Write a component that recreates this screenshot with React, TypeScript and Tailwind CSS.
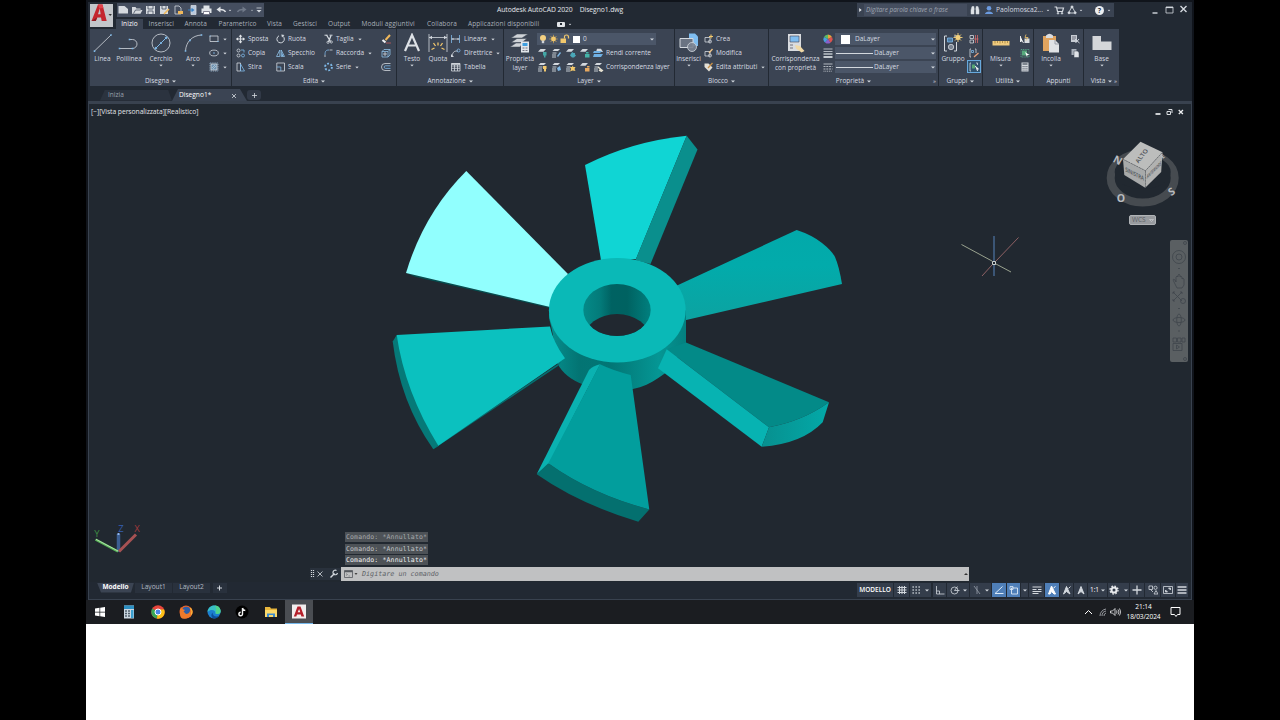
import React from 'react';

type Kids = { children?: React.ReactNode; className?: string };

const Ic: React.FC<Kids & { w?: number; h?: number }> = ({ w = 10, h = 10, className = '', children }) => (
  <svg
    width={w}
    height={h}
    viewBox={`0 0 ${w} ${h}`}
    fill="none"
    stroke="#d3d8de"
    strokeWidth="0.8"
    className={`shrink-0 ${className}`}
  >
    {children}
  </svg>
);

const Caret: React.FC<Kids> = ({ className = '' }) => (
  <svg width="4" height="3" viewBox="0 0 4 3" className={`shrink-0 ${className}`}>
    <path d="M0 .4h4L2 2.6z" fill="#d3d8de" />
  </svg>
);

const Stack = () => (
  <>
    <path d="M3.5 1h5.5l-2 2h-5.5z" fill="#d3d8de" stroke="none" />
    <path d="M1.500 5h4M1 7h4M1 9h4" stroke="#c3c9d0" strokeWidth="1" />
  </>
);

/* ---------- ribbon building blocks ---------- */

const Panel: React.FC<Kids & { title: string; caret?: boolean; launcher?: boolean }> = ({
  title,
  caret = true,
  launcher,
  className = '',
  children,
}) => (
  <section className={`mr-px flex h-[57px] shrink-0 flex-col bg-[#3b4453] ${className}`}>
    <div className="flex h-[45px] pt-[3px]">{children}</div>
    <div className="relative flex h-3 items-center justify-center gap-[3px] pt-[2px]">
      <span>{title}</span>
      {caret && <Caret />}
      {launcher && <span className="absolute right-[2px] text-[6px]">»</span>}
    </div>
  </section>
);

const Col: React.FC<Kids> = ({ className = '', children }) => (
  <div className={`flex shrink-0 flex-col ${className}`}>{children}</div>
);

const Row: React.FC<Kids & { icon: React.ReactNode; caret?: boolean }> = ({ icon, caret, className = '', children }) => (
  <div className={`flex h-[14px] items-center gap-[3px] ${className}`}>
    {icon}
    {children && <span>{children}</span>}
    {caret && <Caret className="ml-[1px] scale-90" />}
  </div>
);

const Big: React.FC<Kids & { label: string; sub?: string; caret?: boolean }> = ({ label, sub, caret, className = '', children }) => (
  <div className={`flex shrink-0 flex-col items-center ${className}`}>
    <div className="flex h-[22px] items-center justify-center">{children}</div>
    <span className="h-[9px] leading-[9px]">{label}</span>
    {sub && <span className="h-[9px] leading-[9px]">{sub}</span>}
    {caret && <Caret className="mt-px scale-90" />}
  </div>
);

/* ---------- top bars ---------- */

const AppButton = () => (
  <div className="relative z-10 -mb-1 flex h-[23px] w-[23px] shrink-0 items-center bg-[#c3c6ca]">
    <svg width="23" height="23" viewBox="0 0 23 23">
      <path d="M1.500 17 8 .5h4.500l4.200 16.500h-5l-.7-3.600H7.400L5.800 17z" fill="#c4262e" />
      <path d="M8 10.200 9.800 4.600l.8 5.600z" fill="#c3c6ca" />
      <path d="M8 .5h4.500l.8 3.500-4 .5z" fill="#e2434b" />
      <path d="M1.500 17 7 13.500 5.800 17z" fill="#8e1a20" />
      <path d="M18.500 10h3.400l-1.700 2z" fill="#333" />
    </svg>
  </div>
);

const QuickAccess = () => (
  <div className="ml-1 flex h-[14px] w-[147px] items-center bg-[#454e5f]">
    <Ic w={14} h={12}><path d="M1.500 2h6l3.500 3v4.500h-9.500z" fill="#d5d9de" stroke="none" /></Ic>
    <Ic w={14} h={12}><path d="M1 3h3.500l1 1.500h4V6h2L9.500 9.700H1z" fill="#d5d9de" stroke="none" /><path d="M2.500 9.500 4.500 6h5" stroke="#454e5f" /></Ic>
    <Ic w={14} h={12}><path d="M1 2h9v8H1z" fill="#d5d9de" stroke="none" /><path d="M3 2v3h5V2M3 10V7h5v3" stroke="#454e5f" /></Ic>
    <Ic w={14} h={12}><path d="M1 2h8v8H1z" fill="#d5d9de" stroke="none" /><path d="M3 2v3h4V2" stroke="#454e5f" /><path d="m5 10 5-5" stroke="#efb85b" strokeWidth="1.600" /></Ic>
    <Ic w={14} h={12}><path d="M2 2h4l2 2v6H2z" /><path d="M5 7h5v3H5z" fill="#efb85b" stroke="none" /></Ic>
    <Ic w={14} h={12}><path d="M4 1.500h5v9H4z" fill="#b9c9dd" /><path d="M1 6h5M4.500 4.500 6.500 6 4.500 7.500" stroke="#3b82c4" strokeWidth="1.200" /></Ic>
    <Ic w={14} h={12}><path d="M2.500 1.500h6v3h2v4.500h-10V4.500h2z" fill="#dfe3e7" stroke="none" /><path d="M2.500 7.500h6v3h-6z" fill="#fff" stroke="#667" /></Ic>
    <Ic w={12} h={12}><path d="M10.500 8C9.500 5.800 8 5.500 5 5.500" stroke="#e1e4e8" strokeWidth="1.500" /><path d="M5.500 2.500 1.500 5.500l4 3z" fill="#e1e4e8" stroke="none" /></Ic>
    <Caret className="ml-[1px] scale-75" />
    <Ic w={14} h={12} className="ml-1"><path d="M1.500 8C2.500 5.800 4 5.500 7 5.500" stroke="#717a89" strokeWidth="1.500" /><path d="m6.500 2.500 4 3-4 3z" fill="#717a89" stroke="none" /></Ic>
    <Caret className="scale-75 opacity-60" />
    <Ic w={6} h={8} className="ml-[2px]"><path d="M.5 2h5" /><path d="M.5 4h5L3 6.500z" fill="#d3d8de" stroke="none" /></Ic>
  </div>
);

const TitleBar = () => (
  <div className="flex h-4 items-start">
    <QuickAccess />
    <div className="ml-[233px] flex h-[14px] w-[360px] items-center gap-[7px] text-[6.800px] tracking-[-0.080px] text-[#e3e6ea]">
      <span>Autodesk AutoCAD 2020</span>
      <span>Disegno1.dwg</span>
    </div>
    <div className="flex h-[14px] w-[257px] items-center bg-[#3a4352]">
      <svg width="7" height="8" viewBox="0 0 7 8"><path d="M2.200 2v4l2.500-2z" fill="#e1e4e8" /></svg>
      <div className="flex h-3 w-[103px] items-center bg-[#454e5f] pl-[2px] text-[6.300px] italic text-[#a0a7b2]">Digitare parola chiave o frase</div>
      <Ic w={11} h={10} className="ml-[3px]"><path d="M1 9V5l1-3.500h2V9zM9 9V5L8 1.500H6V9zM4 4h2" fill="#dfe3e7" strokeWidth=".5" /></Ic>
      <Ic w={10} h={10} className="ml-1"><circle cx="4" cy="3.300" r="2.300" fill="#6b9be0" stroke="none" /><path d="M0 9c0-3.500 8-3.500 8 0z" fill="#6b9be0" stroke="none" /></Ic>
      <span className="ml-px w-[50px] text-[6.700px]">Paolomosca2...</span>
      <Caret className="scale-75" />
      <Ic w={11} h={10} className="ml-[4px]"><path d="M.5 2h2l1 4.500h5l1-3.500H3" strokeWidth="1.200" /><circle cx="4" cy="8.300" r=".8" fill="#d3d8de" /><circle cx="8" cy="8.300" r=".8" fill="#d3d8de" /></Ic>
      <Ic w={11} h={10} className="ml-[2px]"><path d="M5 1.500 1.500 8h7z" strokeWidth=".9" /><circle cx="5" cy="2" r="1.100" fill="#dfe3e7" /><circle cx="2" cy="7.800" r="1" fill="#dfe3e7" /><circle cx="8.200" cy="7.800" r="1" fill="#dfe3e7" /></Ic>
      <Caret className="ml-px scale-75" />
      <div className="ml-[12px] flex h-[9px] w-[9px] items-center justify-center rounded-full bg-[#eceef1] text-[7px] font-bold leading-none text-[#2d3646]">?</div>
      <Caret className="ml-[3px] scale-75" />
    </div>
    <Ic w={40} h={12} className="ml-[37px]"><path d="M1.500 10h5" strokeWidth="1.400" /><path d="M15 4h7v6h-7z" /><path d="M15 4.500h7" strokeWidth="1.200" /><path d="m29.500 3 6 6m0-6-6 6" strokeWidth="1.400" /></Ic>
  </div>
);

const MenuTabs = () => (
  <nav className="flex h-[10px] items-center tracking-[0.090px] text-[#a9b0ba]">
    <span className="ml-[3px] flex h-[10px] w-[27px] items-center justify-center bg-[#3b4453] text-white">Inizio</span>
    <span className="ml-[5.500px] w-[36px]">Inserisci</span>
    <span className="w-[34px]">Annota</span>
    <span className="w-[48.500px]">Parametrico</span>
    <span className="w-[26px]">Vista</span>
    <span className="w-[35px]">Gestisci</span>
    <span className="w-[33.500px]">Output</span>
    <span className="w-[65.500px]">Moduli aggiuntivi</span>
    <span className="w-[41px]">Collabora</span>
    <span className="w-[88.500px]">Applicazioni disponibili</span>
    <span className="flex h-[5px] w-2 items-center justify-center rounded-[1px] bg-[#e1e4e8]"><i className="h-[2px] w-[2px] bg-[#222933]" /></span>
    <Caret className="ml-[3px] scale-75" />
  </nav>
);

/* ---------- ribbon ---------- */

const Draw = () => (
  <Panel title="Disegna" className="w-[141px]">
    <Big label="Linea" className="w-[25px]">
      <Ic w={20} h={20}><path d="M1.500 18 18 2" /><path d="M.7 17.300h1.600v1.600H.7zM17.200 1.200h1.600v1.600h-1.600z" fill="#7fb9e8" stroke="none" /></Ic>
    </Big>
    <Big label="Polilinea" className="w-[28px]">
      <Ic w={22} h={20}><path d="M1.500 15.500h13a4.500 4.500 0 0 0 0-9h-3" /><path d="M.7 14.700h1.600v1.600H.7zM10.700 5.700h1.600v1.600h-1.600zM13.700 14.700h1.600v1.600h-1.600z" fill="#7fb9e8" stroke="none" /></Ic>
    </Big>
    <Big label="Cerchio" caret className="ml-[3px] w-[30px]">
      <Ic w={20} h={20}><circle cx="10" cy="10" r="9" /><path d="m5 15 10-10" stroke="#7fb9e8" strokeWidth="1" /><circle cx="10" cy="10" r="1.100" fill="#7fb9e8" stroke="none" /><path d="m13.500 4 3-.5-.5 3zM6.500 16l-3 .5.5-3z" fill="#7fb9e8" stroke="none" /></Ic>
    </Big>
    <Big label="Arco" caret className="ml-[1px] w-[32px]">
      <Ic w={19} h={20}><path d="M1.500 18C2 9 8 2.500 17.500 2" /><path d="M.7 17.200h1.600v1.600H.7zM16.700 1.200h1.600v1.600h-1.600zM5 6.500h1.800v1.800H5z" fill="#7fb9e8" stroke="none" /></Ic>
    </Big>
    <Col className="w-[22px]">
      <Row caret icon={<Ic><path d="M1 2h8v5.500H1z" /><path d="M.4 1.400h1.200v1.200H.4zM8.400 6.900h1.200v1.200H8.400z" fill="#7fb9e8" stroke="none" /></Ic>} />
      <Row caret icon={<Ic><ellipse cx="5" cy="5" rx="4.300" ry="2.900" /><circle cx="5" cy="5" r=".8" fill="#7fb9e8" stroke="none" /></Ic>} />
      <Row caret icon={<Ic><path d="M1 1h8v8H1z" stroke="#9bb9d2" strokeDasharray="1.400 .8" /><path d="M2 2h6v6H2z" fill="#6f93b1" /><path d="m3 6 3-3M4 7l3-3" stroke="#dce6ee" strokeWidth=".5" /></Ic>} />
    </Col>
  </Panel>
);

const Edit = () => (
  <Panel title="Edita" className="w-[164px]">
    <Col className="w-[40px] pl-[4px]">
      <Row icon={<Ic w={9}><path d="M4.500 1v8M.5 5h8" strokeWidth="1.200" /><path d="m2.700 2.700 1.800-2.200 1.800 2.200zM2.700 7.300l1.800 2.200 1.800-2.200zM2.200 3.200 0 5l2.200 1.800zM6.800 3.200 9 5 6.800 6.800z" fill="#e3e6ea" stroke="none" /></Ic>}>Sposta</Row>
      <Row icon={<Ic w={9}><circle cx="2.500" cy="2.500" r="1.500" /><circle cx="2.500" cy="7.500" r="1.500" /><circle cx="7" cy="7.500" r="1.500" stroke="#7fb9e8" /><path d="M5 2h3v2.500" stroke="#7fb9e8" /></Ic>}>Copia</Row>
      <Row icon={<Ic w={9}><path d="M1 1h3.500v8H1z" /><path d="M4.500 2 8.500 9h-4z" stroke="#7fb9e8" /></Ic>}>Stira</Row>
    </Col>
    <Col className="w-[48px] pl-[4px]">
      <Row icon={<Ic w={9}><path d="M7 2.300A3.700 3.700 0 1 1 3 1.800" strokeWidth="1" /><path d="M5.300.5 8.500 1 6 3.600z" fill="#d3d8de" stroke="none" /></Ic>}>Ruota</Row>
      <Row icon={<Ic w={9}><path d="M3.800 2v6.500H.5zM5.200 2v6.500h3.300z" stroke="#8fc0e6" /><path d="M5.500 4v4h2z" fill="#7fb9e8" stroke="none" /></Ic>}>Specchio</Row>
      <Row icon={<Ic w={9}><path d="M.8 1h7.700v8H.8z" /><path d="M.8 5h4v4" stroke="#7fb9e8" /></Ic>}>Scala</Row>
    </Col>
    <Col className="w-[60px] pl-[4px]">
      <Row caret icon={<Ic w={9}><path d="M.5 1.200h3M5.500 1.200h3" strokeWidth="1" /><path d="m2.500 1 4 6.500M7 1.500 4.500 8" strokeWidth="1.300" /><circle cx="7.300" cy="8" r="1.100" /><circle cx="4" cy="8.300" r="1.100" /></Ic>}>Taglia</Row>
      <Row caret icon={<Ic w={9}><path d="M1 9V7" /><path d="M1 7c0-4 1-5 4-5" stroke="#7fb9e8" /><path d="M5.500 2h3" /></Ic>}>Raccorda</Row>
      <Row caret icon={<Ic w={9}><circle cx="4.500" cy="5" r="3.400" stroke="#7fb9e8" strokeWidth="1.900" strokeDasharray="1.900 1.660" /></Ic>}>Serie</Row>
    </Col>
    <Col className="w-[12px] pl-[1px]">
      <Row icon={<Ic><path d="m4.500 6 4.500-5" stroke="#efb85b" strokeWidth="2" /><path d="M1.500 6 4.500 8.500" stroke="#f1f2f4" strokeWidth="2.200" /><path d="M5 9h5" stroke="#c35b5b" /></Ic>} />
      <Row icon={<Ic><path d="M1 3.500h6v5.500H1zM3 1.500h6v5.500M1 3.500l2-2M7 3.500l2-2M7 9l2-2" stroke="#8fc0e6" /><path d="M3 5h2v2H3z" /></Ic>} />
      <Row icon={<Ic><path d="M9.500 1.500H4a3.500 3.500 0 0 0 0 7h5.500" /><path d="M9.500 3.800H4.500a1.200 1.200 0 0 0 0 2.600h5" stroke="#7fb9e8" /></Ic>} />
    </Col>
  </Panel>
);

const Annotate = () => (
  <Panel title="Annotazione" className="w-[106px]">
    <Big label="Testo" caret className="w-[30px]">
      <Ic w={18} h={20}><path d="M2 18 9 2l7 16M4.800 12.500h8.400" stroke="#dde1e6" strokeWidth="2.200" /></Ic>
    </Big>
    <Big label="Quota" className="w-[22px]">
      <Ic w={20} h={20}><path d="M1 1v18M19 1v18M1 4.500h18" /><path d="m1 4.500 3-1.700v3.400zM19 4.500l-3-1.700v3.400z" fill="#d3d8de" stroke="none" /><path d="m5.500 10 2 3M10 9.500v3M14.500 10l-2 3M3.500 16.500l3-1.500M16.500 16.500l-3-1.500" stroke="#f2c86c" strokeWidth="1.300" /></Ic>
    </Big>
    <Col className="w-[54px] pl-[1px]">
      <Row caret icon={<Ic w={11}><path d="M1.500 1v8M9.500 1v8" stroke="#7fb9e8" /><path d="M1.500 5h8" /><path d="m1.500 5 2-1v2zM9.500 5l-2-1v2z" fill="#d3d8de" stroke="none" /></Ic>}>Lineare</Row>
      <Row caret icon={<Ic w={11}><path d="M2 8c1-5 3-5 6-5" /><circle cx="8.500" cy="2.500" r="1.500" stroke="#7fb9e8" /><path d="M1 6v3h3z" fill="#d3d8de" stroke="none" /></Ic>}>Direttrice</Row>
      <Row icon={<Ic w={11}><path d="M1.500 1.500h8.500v7.500H1.500zM1.500 6.300h8.500M4.500 3v6M7.500 3v6M1.500 4h8.500" /><path d="M1.500 2h8.500" strokeWidth="1.600" /></Ic>}>Tabella</Row>
    </Col>
  </Panel>
);

const LayerTool: React.FC<{ mark: string; full?: boolean; shape: string }> = ({ mark, full, shape }) => (
  <Ic w={11} className="mr-[3px]">
    {full ? <Stack /> : <path d="M3.500 1h5.500l-2.500 2.800H1z" fill="#d3d8de" stroke="none" />}
    <path d={shape} fill={mark} stroke="none" />
  </Ic>
);

const Layer = () => (
  <Panel title="Layer" className="w-[170px]">
    <Big label="Proprietà" sub="layer" className="w-[32px]">
      <Ic w={22} h={20}>
        <path d="M8 1h11l-6 4H2zM8 5.500h10l-5 4H2zM7 10h7l-3 4H1z" fill="#cfd3d8" stroke="#3b4453" strokeWidth=".5" />
        <path d="M12 8.500h8v11h-8z" fill="#e3e6ea" stroke="none" /><path d="M13.500 10h5v3h-5z" fill="#3f9fe0" stroke="none" /><path d="M13.500 15h2m1 0h2m-5 2.500h2m1 0h2" stroke="#556" />
      </Ic>
    </Big>
    <Col className="w-[137px] pl-[1px]">
      <div className="flex h-[14px] items-center">
        <div className="flex h-[12px] w-[119px] items-center bg-[#4b5668]">
          <Ic w={11}><circle cx="6" cy="4" r="3" fill="#f4d081" stroke="none" /><path d="M4.800 6.500h2.400v2.700H4.800z" fill="#cfd3d8" stroke="none" /></Ic>
          <Ic w={11}><path d="M5.500.8v8.400M1.300 5h8.400M2.500 2l6 6M8.500 2l-6 6" stroke="#d3a752" strokeWidth=".7" /><circle cx="5.500" cy="5" r="2.400" fill="#f2c86c" stroke="none" /></Ic>
          <Ic w={11}><path d="M1.500 4.500h5.500v4.500H1.500z" fill="#f2c86c" stroke="none" /><path d="M5.500 4.500V2.500q0-1.500 2-1.500t2 2v1.500" stroke="#f2c86c" strokeWidth="1.200" /></Ic>
          <i className="ml-[3px] h-[7px] w-[7px] bg-white" />
          <span className="ml-[3px] w-[67px]">0</span>
          <Caret />
        </div>
      </div>
      <div className="flex h-[14px] items-center">
        <LayerTool mark="#43a6a6" shape="M6 4h3.500v3.500H8.500v2h-1.500v-2H6z" />
        <LayerTool full mark="#7fb9e8" shape="m6 8 3-4 1 1-3 4z" />
        <LayerTool mark="#4aa7b8" shape="M7.500 4l1 1h1.500v1.500L11 7.500 9 9.500H7L5 7.500l1-2z" />
        <LayerTool mark="#45b3a8" shape="M6 6h4.500v3.500H6zM7 4h2.500v1.500H7z" />
        <Ic w={11}><path d="M4 .8h4L10 4H3z" fill="#d3d8de" stroke="none" /><path d="M1 3h8L7 5H0zM1 6h9L8 9H0z" fill="#6fb0e4" stroke="none" /></Ic>
        <span className="ml-[2px]">Rendi corrente</span>
      </div>
      <div className="flex h-[14px] items-center">
        <LayerTool full mark="#f2c86c" shape="M6 4h3.500v3H9v2.500H7V7H6z" />
        <LayerTool full mark="#7fb9e8" shape="M6 6l3-2 1 4-3 1z" />
        <LayerTool full mark="#f2c86c" shape="M7.500 3.500l1 1.500h2L9.500 7l1 2-3-.5L5 9.500 6 7 5 5h2z" />
        <LayerTool mark="#e6a860" shape="M6 6h4.500v3.500H6zM8 4h2.500v1.500H8z" />
        <Ic w={11}><Stack /><path d="m5 5 5 4M6 8l3 1.500" stroke="#e7e2d2" strokeWidth="1.600" /></Ic>
        <span className="ml-[2px] tracking-[-0.050px]">Corrispondenza layer</span>
      </div>
    </Col>
  </Panel>
);

const Block = () => (
  <Panel title="Blocco" className="w-[93px]">
    <Big label="Inserisci" caret className="w-[27px]">
      <Ic w={20} h={20}><path d="M10 .5h6l3 3v9.500h-9z" fill="#7fbdf0" stroke="none" /><path d="M1 5.500h13v9H1z" fill="#6a7382" strokeWidth="1" /><circle cx="13" cy="14" r="4.500" fill="#7b8492" fillOpacity=".9" /></Ic>
    </Big>
    <Col className="w-[64px] pl-[2px]">
      <Row icon={<Ic w={9}><path d="M1 3.500h5v4.500H1z" /><circle cx="6" cy="7.500" r="1.500" /><path d="M7 .5v4M5 2.500h4" stroke="#f2c86c" strokeWidth="1.100" /></Ic>}>Crea</Row>
      <Row icon={<Ic w={9}><path d="M1 3.500h5v4.500H1z" /><circle cx="6" cy="7.500" r="1.500" /><path d="m5 5 3.500-4" stroke="#efc58a" strokeWidth="1.400" /></Ic>}>Modifica</Row>
      <Row caret icon={<Ic w={9}><path d="M.5 1.500h4l4 4L5 9.500.5 5z" fill="#e4e0d6" stroke="none" /><path d="m4 6 4.500-5" stroke="#c99047" strokeWidth="1.300" /></Ic>}>Edita attributi</Row>
    </Col>
  </Panel>
);

const Combo: React.FC<Kids> = ({ className = '', children }) => (
  <div className={`ml-[2px] flex h-[12px] w-[101px] items-center bg-[#4b5668] ${className}`}>{children}<Caret className="ml-auto mr-[1px]" /></div>
);

const Properties = () => (
  <Panel title="Proprietà" launcher className="w-[169px]">
    <Big label="Corrispondenza" sub="con proprietà" className="w-[53px]">
      <Ic w={20} h={20}><path d="M2 1h13v17H2z" fill="#d9dce0" stroke="none" /><path d="M4 3h9v6H4z" fill="#7fbdf0" stroke="#445" strokeWidth=".6" /><path d="M4 12h3M4 15h3" stroke="#556" /><path d="m9 12 5 1 4.500 5-3 1.500-5.500-4z" fill="#f0d9a6" stroke="none" /></Ic>
    </Big>
    <Col className="w-[115px] pl-px">
      <div className="flex h-[14px] items-center">
        <Ic w={10}>
          <path d="M5 5V.5A4.500 4.500 0 0 1 9 3z" fill="#e9a33c" stroke="none" /><path d="M5 5 9 3a4.500 4.500 0 0 1-1.500 5.700z" fill="#d9534f" stroke="none" />
          <path d="M5 5l2.500 3.700A4.500 4.500 0 0 1 2 8.400z" fill="#8a5fc8" stroke="none" /><path d="M5 5 2 8.400A4.500 4.500 0 0 1 1 3z" fill="#4b9fe0" stroke="none" /><path d="M5 5 1 3A4.500 4.500 0 0 1 5 .5z" fill="#5dbb63" stroke="none" />
        </Ic>
        <Combo><i className="ml-[6px] mr-[5px] h-[9px] w-[9px] bg-white" />DaLayer</Combo>
      </div>
      <div className="flex h-[14px] items-center">
        <Ic w={10}><path d="M.5 1h9M.5 3.500h9" /><path d="M.5 6h9" strokeWidth="1.300" /><path d="M.5 9h9" strokeWidth="1.800" /></Ic>
        <Combo><i className="ml-px mr-px h-px w-[37px] bg-[#d3d8de]" />DaLayer</Combo>
      </div>
      <div className="flex h-[14px] items-center">
        <Ic w={10}><path d="M.5 2h9" /><path d="M.5 4.500h9M.5 7h9" strokeDasharray="2 .8" /><path d="M.5 9.200h9" strokeDasharray="1 .8" /></Ic>
        <Combo><i className="ml-px mr-px h-px w-[37px] bg-[#d3d8de]" />DaLayer</Combo>
      </div>
    </Col>
  </Panel>
);

const Groups = () => (
  <Panel title="Gruppi" className="w-[43px]">
    <Big label="Gruppo" className="w-[28px]">
      <Ic w={20} h={20}><path d="M4 3H1.500v15H4M11 3h2.500M11 18h2.500V9" strokeWidth="1" /><path d="M4.500 5h5v4h-5z" fill="#4d7ca6" stroke="#7fb9e8" /><circle cx="8" cy="14" r="2.700" fill="#7b8492" /><path d="M15 0v9M10.500 4.500h9M12 1.500l6 6M18 1.500l-6 6" stroke="#f2d07c" strokeWidth=".9" /><circle cx="15" cy="4.500" r="2.500" fill="#f2d07c" stroke="none" /></Ic>
    </Big>
    <Col className="w-[14px] items-center">
      <Row icon={<Ic><path d="M1 1.500h3.500v3H1zM1 6h3.500v3H1z" /><path d="M6.500 1v8M8.500 1v8M5 5h4.500" stroke="#d66a6a" /></Ic>} />
      <Row icon={<Ic><path d="M2 1H1v8h1M6 1h1v4" /><path d="M2.500 2.500h2v2h-2z" stroke="#7fb9e8" /><path d="m5 9 4.500-4" stroke="#e6a07a" strokeWidth="1.300" /></Ic>} />
      <div className="flex h-[13px] w-[14px] items-center justify-center border border-[#67a9dd] bg-[#31536f]">
        <Ic><path d="M2 1H1v8h1M7 1h1.500v2" /><path d="M3 2.500h3v4H3z" fill="#57a773" stroke="none" /><path d="m6 4 3.500 3H8l.5 2" fill="#fff" stroke="#fff" /></Ic>
      </div>
    </Col>
  </Panel>
);

const Utilities = () => (
  <Panel title="Utilità" className="w-[50px]">
    <Big label="Misura" caret className="w-[35px]">
      <Ic w={18} h={20}><path d="M.5 8h17v4.500H.5z" fill="#f0cb7e" stroke="none" /><path d="M3 8v2.500M5.500 8v2M8 8v2.500M10.500 8v2M13 8v2.500M15.500 8v2" stroke="#8a6b2c" strokeWidth=".6" /></Ic>
    </Big>
    <Col className="w-[14px] items-center">
      <Row icon={<Ic><path d="M.5 2v6L2 6.500 3.500 9" fill="#fff" stroke="#fff" /><path d="M4.500 4.500H9.500V9H4.500z" fill="#d9dce0" stroke="none" /><path d="m6 .5-1 3h3l-2 3" stroke="#f2c86c" /></Ic>} />
      <Row icon={<Ic><path d="M1 1.500h8v7.500H1z" stroke="#5aae8d" strokeDasharray="1.200 .6" /><path d="M2 2.500h5v5H2z" fill="#56a87c" stroke="none" /><path d="m5 4 4.500 3H7.500L7 9z" fill="#fff" stroke="none" /></Ic>} />
      <Row icon={<Ic><path d="M1.500.5h7v9h-7z" fill="#d5d9de" stroke="none" /><path d="M2.500 2h5" stroke="#444d5c" strokeWidth="1.200" /><path d="M2.500 4.500h5M2.500 6.300h5M2.500 8.100h5" stroke="#444d5c" strokeDasharray="1.200 .7" /></Ic>} />
    </Col>
  </Panel>
);

const Clipboard = () => (
  <Panel title="Appunti" caret={false} className="w-[49px]">
    <Big label="Incolla" caret className="w-[34px]">
      <Ic w={18} h={20}><path d="M1 3h13v15H1z" fill="#e0a45f" stroke="none" /><path d="M4 2.500Q7.500-1 11 2.500V5H4z" fill="#d9dce0" stroke="none" /><path d="M7 7h6l4 4v8.500H7z" fill="#dfe2e6" stroke="none" /><path d="M13 7v4h4" stroke="#8b93a0" /></Ic>
    </Big>
    <Col className="w-[14px] items-center">
      <Row icon={<Ic><path d="M1 1h6v7H1z" fill="#c6cbd2" stroke="none" /><path d="M2 3h4M2 5h4" stroke="#556" /><path d="m5 5 4.500 4M9 5 5.500 9" strokeWidth="1" /></Ic>} />
      <Row icon={<Ic><path d="M1.500 1h5v6h-5z" fill="#aab1bb" stroke="none" /><path d="M4 3h3.500L9 4.500V9.500H4z" fill="#e1e4e8" stroke="#3b4453" strokeWidth=".5" /></Ic>} />
    </Col>
  </Panel>
);

const View = () => (
  <Panel title="Vista" launcher className="w-[35px]">
    <Big label="Base" caret className="w-[35px]">
      <Ic w={20} h={20}><path d="M.5 3H9v5.500h10.500V17H.5z" fill="#d4d6d9" stroke="none" /></Ic>
    </Big>
  </Panel>
);

const FileTabs = () => (
  <div className="mt-[3px] flex h-[12px] items-center pl-[12px]">
    <div className="flex h-[11px] w-[72px] items-center bg-[#2b333f] pl-[8px] text-[#9aa2ad] [clip-path:polygon(5px_0,68px_0,72px_100%,0_100%)]">Inizia</div>
    <div className="flex h-[12px] w-[75px] items-center rounded-t-[3px] bg-[#3b4453] pl-[7px] pt-px text-white [clip-path:polygon(6px_0,68px_0,75px_100%,0_100%)]">
      <span className="w-[52px] text-[6.600px]">Disegno1*</span>
      <Ic w={6} h={6}><path d="m1 1 4 4M5 1 1 5" /></Ic>
    </div>
    <div className="flex h-[10px] w-[14px] items-center justify-center rounded-[3px] bg-[#313947]">
      <Ic w={7} h={7}><path d="M3.500 1v5M1 3.500h5" /></Ic>
    </div>
  </div>
);

/* ---------- viewport ---------- */

const Model = () => (
  <svg width="1102" height="478" viewBox="89 104 1102 478" className="absolute inset-0">
    <defs>
      <linearGradient id="side" x1="549" x2="686" y1="0" y2="0" gradientUnits="userSpaceOnUse">
        <stop offset="0" stopColor="#068f8e" /><stop offset=".22" stopColor="#037473" /><stop offset=".45" stopColor="#027675" />
        <stop offset=".8" stopColor="#059694" /><stop offset="1" stopColor="#04807f" />
      </linearGradient>
      <linearGradient id="bore" x1="583" x2="651" y1="0" y2="0" gradientUnits="userSpaceOnUse">
        <stop offset="0" stopColor="#048a88" /><stop offset=".25" stopColor="#037b7a" /><stop offset=".42" stopColor="#006262" /><stop offset=".65" stopColor="#006261" /><stop offset="1" stopColor="#01807f" />
      </linearGradient>
      <linearGradient id="right" x1="0" x2="0" y1="230" y2="320" gradientUnits="userSpaceOnUse">
        <stop offset="0" stopColor="#02a9aa" /><stop offset=".4" stopColor="#02abab" /><stop offset="1" stopColor="#0ca3a1" />
      </linearGradient>
      <linearGradient id="tip" x1="765" x2="828" y1="0" y2="0" gradientUnits="userSpaceOnUse">
        <stop offset="0" stopColor="#079190" /><stop offset="1" stopColor="#03a9a8" />
      </linearGradient>
      <clipPath id="hole"><ellipse cx="617" cy="310" rx="33.700" ry="26" /></clipPath>
    </defs>

    <path d="M585 165Q631 141.500 686.700 135.700L636 259 601 260z" fill="#10d5d4" />
    <path d="M686.700 135.700 697.500 149.500 650.500 264 635.500 260z" fill="#0a8f8d" />
    <path d="M406 273 549 306.700 549.500 308 415 276.800z" fill="#034f50" />
    <path d="M466.300 171Q424 213 406 273L550 307 568 274z" fill="#91fffe" />
    <path d="M676 286 796.700 230Q812 235 822 243T835 257Q839 266 842 284L684 320.500z" fill="url(#right)" />

    <path d="M549 314V318Q554 335 556 360C563 380 590 390.500 617 390.500 640 390.500 655 382 670 369L686 344V310z" fill="url(#side)" />
    <path d="M396.700 335 392.700 341.500Q400 402 433.300 449.300L438.500 446z" fill="#067978" />
    <path d="M433.300 449.300 438.300 445 561 362 558 366z" fill="#047071" />
    <path d="M396.700 335 550 326.500Q553 342 565 358.300L438.300 445.700Q405 392 396.700 335z" fill="#0bc1bf" />

    <path d="M536.700 474.300 589 370Q593 366 600 364.300L549 464z" fill="#0ab2b1" />
    <path d="M548.300 463.300Q591 494 649.300 509.500L638.300 521.700Q579 504 536.700 474.300z" fill="#04706f" />
    <path d="M600 364.300Q614 371 630.700 375L649.300 509.500Q591 494 548.300 463.300z" fill="#029e9d" />

    <path d="M666.700 349.300 686 342.500 829 402.300Q803 421 769 427.300z" fill="#038a88" />
    <path d="M666.700 349.300 769 427.300 761.700 446.700 658 368.300z" fill="#07b3b2" />
    <path d="M769 427.300Q803 421 829 402.300L822.700 422.300Q802 444 761.700 446.700z" fill="url(#tip)" />

    <ellipse cx="617.300" cy="310.200" rx="68.400" ry="52.300" fill="#0ab9b7" />
    <ellipse cx="617" cy="310" rx="33.700" ry="26" fill="url(#bore)" />
    <ellipse cx="617" cy="339" rx="33" ry="25" fill="#212830" clipPath="url(#hole)" />

    <g fill="none" strokeWidth=".9">
      <path d="M961.500 244.500 992 261M996 264l15 8" stroke="#a7b09a" />
      <path d="M994 236v25M994 265v11" stroke="#4a6f9c" strokeWidth="1.300" />
      <path d="M1018.500 237.500 996 261M992 265l-10 11" stroke="#9c686a" />
      <path d="M992.500 261.500h3v3h-3z" stroke="#dfe3e0" />
    </g>

    <g fill="none">
      <path d="M118.500 534v18" stroke="#3c5e92" strokeWidth="3.500" />
      <path d="M119 551.500 136 534.500" stroke="#a65253" strokeWidth="3" />
      <path d="M118 551.500 95.500 539.500" stroke="#58b558" strokeWidth="2.500" />
      <path d="M118 551 96 539.300" stroke="#b9e0b2" strokeWidth=".9" />
      <path d="M117.500 534h2" stroke="#8fb5ee" strokeWidth="2" />
    </g>
    <g fontFamily="Open Sans, sans-serif" fontSize="9.500" textAnchor="middle">
      <text x="97" y="536.500" fill="#3d8a43">Y</text>
      <text x="121" y="531.500" fill="#355fb0">Z</text>
      <text x="137" y="532" fill="#a0393c">X</text>
    </g>

    <ellipse cx="1142.700" cy="178" rx="32" ry="24.500" fill="none" stroke="#464b50" strokeWidth="8" />
    <ellipse cx="1142.700" cy="172" rx="28" ry="17" fill="#212830" />
    <path d="m1140.500 141.700 22 10.500-17 18.500-22.500-11.500z" fill="#bcbdbc" />
    <path d="m1123 159.200 22.500 11.500-.3 17-20.900-12.700z" fill="#a8aaaa" />
    <path d="m1162.500 152.200-17 18.500-.3 17 16-15.700z" fill="#b1b2b1" />
    <path d="m1123 159.200 22.500 11.500 17-18.500M1145.500 170.700v17" stroke="#5a5e63" strokeWidth=".6" strokeDasharray="2 1" fill="none" />
    <g fontFamily="Open Sans, sans-serif" fontWeight="600" fill="#4b4f54" textAnchor="middle">
      <text fontSize="6.500" transform="matrix(.6 -.78 .8 .45 1143.500 157)">ALTO</text>
      <text fontSize="6" textLength="21" lengthAdjust="spacingAndGlyphs" transform="matrix(.89 .46 0 1 1134.500 176)">SINISTRA</text>
      <text fontSize="5.500" textLength="19" lengthAdjust="spacingAndGlyphs" transform="matrix(.76 -.75 0 1 1154 172)">ANTERIORE</text>
    </g>
    <g fontFamily="Open Sans, sans-serif" fontWeight="700" fontSize="10.500" fill="#b9bcc0" textAnchor="middle">
      <text transform="translate(1116 163.500) rotate(28)">N</text>
      <text x="1121" y="201.500">O</text>
      <text transform="translate(1173.500 194.500) rotate(-35)">S</text>
      <text fontSize="6" transform="translate(1164 158) rotate(-40)">E</text>
    </g>

    <g fill="none">
      <path d="M1155.500 114h5" stroke="#e9ebee" strokeWidth="1.700" />
      <path d="M1167 111.500h3.500v3H1167zM1168.500 109.500h3.500v3.500" stroke="#d9dce0" strokeWidth="1" />
      <path d="m1178.700 110 4.200 4M1183 110l-4.200 4" stroke="#eceef0" strokeWidth="1.300" />
    </g>
  </svg>
);

const NavBar = () => (
  <div className="absolute left-[1081px] top-[136px] flex h-[122px] w-[18px] flex-col items-center rounded-[2px] bg-[#5a5f62]">
    <Ic w={18} h={122}>
      <g stroke="#3f454b">
        <circle cx="15" cy="3" r="1.500" />
        <circle cx="9" cy="17" r="6.500" /><circle cx="9" cy="17" r="3" />
        <path d="M8 28.500h2M8 68.500h2M8 91h2" />
        <path d="M4 42q-2-4 1-2l1 2v-5q1-2 2 0v-2q1-1.500 2 0v2q1-1.500 2 0v2q1-1.500 2 0v6l-2 3H7z" />
        <path d="m3 52 9 9M12 52l-9 9M3 54v-2h2M10 52h2v2M3 59v2h2" /><circle cx="13" cy="61" r="2.500" />
        <ellipse cx="9" cy="80" rx="6" ry="2.500" /><ellipse cx="9" cy="80" rx="2.300" ry="6" />
        <path d="M3 98h3.500v4H3zM7.500 98H11v4H7.500zM12 98h3v4h-3zM3 103.500h9v7H3zM6.500 105l3 2-3 2z" />
        <circle cx="15" cy="119" r="1.500" />
      </g>
    </Ic>
  </div>
);

const CommandLine = () => (
  <div className="absolute left-[221px] top-[428px] flex w-[660px] flex-col font-['DejaVu_Sans_Mono','Liberation_Mono',monospace] text-[6.500px]">
    <div className="ml-[35px] flex w-[83px] flex-col gap-[1.500px] tracking-[0.140px]">
      <span className="h-[10px] bg-[#4d5257] pl-[1px] leading-[11px] text-[#a5a8ab]">Comando: *Annullato*</span>
      <span className="h-[10px] bg-[#4d5257] pl-[1px] leading-[11px] text-[#c3c6c9]">Comando: *Annullato*</span>
      <span className="h-[10px] bg-[#4d5257] pl-[1px] leading-[11px] text-[#f0f1f2]">Comando: *Annullato*</span>
    </div>
    <div className="mt-[2px] flex h-[14px] items-center">
      <Ic w={31} h={12} className="bg-[#29313c]"><path d="M1.500 2v8M3.500 2v8" strokeDasharray="1 1" strokeWidth="1.200" /><path d="m7.500 3.500 5 5M12.500 3.500l-5 5" /><path d="m20.500 9.500 4-4" strokeWidth="1.500" /><path d="M26.500 2.500a2.300 2.300 0 1 0 1 2.500" strokeWidth="1.200" /></Ic>
      <div className="flex h-[14px] w-[628px] items-center bg-[#c0c1c2] text-[6.730px]">
        <Ic w={14} h={10} className="ml-[3px]"><path d="M.5 1.500h8v7h-8z" stroke="#55595e" /><path d="M.5 2.500h8" stroke="#55595e" strokeWidth="1.500" /><path d="m2 4.500 1.500 1L2 6.500M4.500 7H6" stroke="#55595e" strokeWidth=".5" /><path d="M10.500 4h3L12 6z" fill="#444" stroke="none" /></Ic>
        <span className="ml-[4px] flex-1 italic text-[#5d6267]">Digitare un comando</span>
        <svg width="6" height="6" viewBox="0 0 6 6"><path d="M1 4h4L3 2z" fill="#333" /></svg>
      </div>
    </div>
  </div>
);

/* ---------- bottom bars ---------- */

const Cell: React.FC<Kids & { on?: boolean }> = ({ on, className = '', children }) => (
  <span className={`flex h-[14px] shrink-0 items-center justify-center ${on ? 'bg-[#4f7fb8]' : 'bg-[#343d4b]'} ${className}`}>{children}</span>
);

const StatusBar = () => (
  <div className="flex h-[17px] items-start pl-[8px]">
    <div className="flex h-[11px] items-center">
      <span className="flex h-[10px] w-[37px] items-center justify-center bg-[#3b4453] font-bold text-white [clip-path:polygon(0_0,100%_0,34px_100%,4px_100%)]">Modello</span>
      <span className="ml-[1px] flex h-[10px] w-[37px] items-center justify-center bg-[#29313d] text-[6.600px] text-[#b3b9c2]">Layout1</span>
      <span className="ml-[1px] flex h-[10px] w-[37px] items-center justify-center bg-[#29313d] text-[6.600px] text-[#b3b9c2]">Layout2</span>
      <Ic w={14} h={10} className="ml-[3px] bg-[#29313d]"><path d="M6.500 2.500v5M4 5h5" strokeWidth="1" /></Ic>
    </div>
    <div className="ml-[630px] flex h-[15px] items-center gap-px pt-px">
      <Cell className="w-[36px] text-[6.500px] font-semibold text-white">MODELLO</Cell>
      <Cell className="w-[15px]"><Ic><path d="M2.500 1v8M5 1v8M7.500 1v8M.5 2.500h9M.5 5h9M.5 7.500h9" strokeWidth="1" /></Ic></Cell>
      <Cell className="w-[21px] gap-[4px]"><Ic w={9}><path d="M.5 2h8M.5 5h8M.5 8h8" strokeWidth="1.300" strokeDasharray="1.300 1.700" /></Ic><Caret /></Cell>
      <Cell className="ml-[1px] w-[13px]"><Ic><path d="M1.500 1v8H9.500M1.500 6h3v3" /></Ic></Cell>
      <Cell className="w-[22px] gap-[3px]"><Ic><circle cx="4.500" cy="5.500" r="3.500" /><path d="M4.500 5.500h5M4.500 5.500l3-4" /></Ic><Caret /></Cell>
      <Cell className="w-[21px] gap-[3px]"><Ic><path d="m2 1 6 8M5 1v8" stroke="#98a0ab" /></Ic><Caret /></Cell>
      <Cell on className="w-[14px]"><Ic><path d="M1 8.500h8.500M1 8.500 8.500 1.500" stroke="#dceaf8" strokeWidth="1" /></Ic></Cell>
      <Cell on className="w-[13px]"><Ic><path d="M2.500 3h6v6h-6z" stroke="#eef4fb" /><path d="M1 1.500h3v3H1z" stroke="#dceaf8" /></Ic></Cell>
      <Cell className="w-[7px]"><Caret /></Cell>
      <Cell className="w-[15px]"><Ic><path d="M.5 2h9M.5 4.500h4M6 4.500h3.500M.5 6.500h9M.5 8.500h6" strokeWidth="1.200" /></Ic></Cell>
      <Cell on className="w-[14px]"><Ic><path d="M4.500 1 1.500 9H3l1.500-2.500L7 9h1.500zM6.500 3l2-1.500" fill="#fff" stroke="#fff" strokeWidth="1" /></Ic></Cell>
      <Cell className="w-[13px]"><Ic><path d="M4.500 1.500 1.500 9 4.500 6.500 8 9zM6.500 3.500l2-2" fill="#d3d8de" strokeWidth="1" /></Ic></Cell>
      <Cell className="w-[13px]"><Ic><path d="M5 1.500 2 9 5 6.500 8 9z" fill="#d3d8de" strokeWidth="1" /></Ic></Cell>
      <Cell className="w-[19px] gap-[2px] text-[6.500px] text-white">1:1<Caret /></Cell>
      <Cell className="w-[21px] gap-[5px]"><Ic w={10}><circle cx="5" cy="5" r="2.500" stroke="#e9ebee" strokeWidth="2" /><circle cx="5" cy="5" r="4" stroke="#e9ebee" strokeWidth="1.300" strokeDasharray="1.600 1.540" /></Ic><Caret /></Cell>
      <Cell className="w-[14px]"><Ic><path d="M5 .5v9M.5 5h9" strokeWidth="1.300" /></Ic></Cell>
      <Cell className="w-[15px]"><Ic><path d="M1 1h3.500v3.500H1zM6 9l2-3.500 2 3.500zM2.500 4.500 5 7" /><circle cx="7.500" cy="2.800" r="1.600" /></Ic></Cell>
      <Cell className="w-[14px]"><Ic><path d="M.5 1.500h9v7h-9z" /><path d="M2.500 7V5l2 2zM7.500 3v2l-2-2z" fill="#d3d8de" /></Ic></Cell>
      <Cell className="w-[12px]"><Ic><path d="M.5 2h9M.5 5h9M.5 8h9" strokeWidth="1.300" /></Ic></Cell>
    </div>
  </div>
);

const Taskbar = () => (
  <div className="flex h-6 items-center bg-[#1b1d21]">
    <div className="flex w-[28px] justify-center"><Ic><path d="M0 1.400 4.500.8v3.900H0zM5.200.7 10 0v4.700H5.200zM0 5.400h4.500v3.900L0 8.600zM5.200 5.400H10V10l-4.800-.7z" fill="#fff" stroke="none" /></Ic></div>
    <div className="flex w-[30px] justify-center">
      <Ic w={12} h={14}><path d="M1 .5h10v13H1z" fill="#cdd8e2" stroke="none" /><path d="M1 .5h10V4H1z" fill="#2c8fc2" stroke="none" /><path d="M2 6h8M2 8.500h8M2 11h8" stroke="#51606e" strokeDasharray="2 1" strokeWidth="1.300" /><path d="M8 5h2.500v8H8z" fill="#3a9fd0" stroke="none" /></Ic>
    </div>
    <div className="flex w-[27px] justify-center">
      <Ic w={14} h={14}><circle cx="7" cy="7" r="6.700" fill="#e8453c" stroke="none" /><path d="M7 7 1.200 3.600A6.700 6.700 0 0 0 6 13.600z" fill="#3aa757" stroke="none" /><path d="M7 7 6 13.600A6.700 6.700 0 0 0 13.200 4.500H7z" fill="#fbc116" stroke="none" /><circle cx="7" cy="7" r="3" fill="#4a86e8" stroke="#fff" strokeWidth="1" /></Ic>
    </div>
    <div className="flex w-[29px] justify-center">
      <Ic w={14} h={14}><circle cx="7" cy="7" r="6.500" fill="#e8642a" stroke="none" /><circle cx="7.300" cy="5.800" r="4" fill="#2d5fa8" stroke="none" /><path d="M1 4.500 2 2l1.500 2L6 5 4.500 6.500 7 9q3 0 4-3t0-4q3 2 2.500 6T7 13.500 1 9z" fill="#ee7a2a" stroke="none" /><path d="M11.500 3q2.500 3 1 6.500" stroke="#f9c440" strokeWidth="1" /></Ic>
    </div>
    <div className="flex w-[28px] justify-center">
      <Ic w={14} h={14}><circle cx="7" cy="7" r="6.500" fill="#1b7fd0" stroke="none" /><path d="M.6 7C1 2 5 .4 8 .6c4 .3 6 3.400 5.500 6.400-.3 2-3 2.300-5 1.500C9 5 4 3.500.6 7z" fill="#38c0c4" stroke="none" /><path d="M8 .6c4 .3 6 3.400 5.500 6.400-.3 2-3 2.300-5 1.500Q10 4 8 .6z" fill="#4fd48c" stroke="none" /><path d="M5.500 7.500c0 4 4 5 7 3Q9 15 5 12.500 3.500 10 5.500 7.500z" fill="#0d4f9c" stroke="none" /></Ic>
    </div>
    <div className="flex w-[28px] justify-center">
      <Ic w={14} h={14}><circle cx="7" cy="7" r="6.500" fill="#000" stroke="none" /><path d="M7.500 3v6a1.800 1.800 0 1 1-1.800-1.800M7.500 3q.5 2.300 2.800 2.500" stroke="#f4f4f4" strokeWidth="1.400" /></Ic>
    </div>
    <div className="flex w-[29px] justify-center">
      <Ic w={14} h={12}><path d="M1 1h5l1 1.500h6V11H1z" fill="#e9b73d" stroke="none" /><path d="M1 4h12v7H1z" fill="#fbd96b" stroke="none" /><path d="M3 11V7.500h8V11H9V9H5v2z" fill="#3c8bd0" stroke="none" /></Ic>
    </div>
    <div className="flex h-6 w-[28px] items-center justify-center border-b border-[#76b9ed] bg-[#4a4d52]">
      <Ic w={14} h={15}><path d="M0 .5h14v14H0z" fill="#f3eeee" stroke="none" /><path d="M1.800 12.500 5.500 2.500h3l3.700 10H9.400l-.6-2H5l-.7 2zM5.700 8.300h2.600L7.100 5z" fill="#b5202b" fillRule="evenodd" stroke="none" /></Ic>
    </div>
    <div className="ml-[771px] flex items-center">
      <Ic w={9} h={8}><path d="m1 6 3.500-3.500L8 6" stroke="#fff" strokeWidth="1" /></Ic>
      <Ic w={10} h={10} className="ml-[5px]"><path d="M2 9a7 7 0 0 1 6-7M4 9a5 5 0 0 1 4-5M6 9a3 3 0 0 1 2-3" stroke="#b5b8bc" /></Ic>
      <Ic w={11} h={10} className="ml-[2px]"><path d="M.5 4h2L5 1.500v7L2.500 6h-2zM6.500 3.500q1 1.500 0 3M8 2.500q2 2.500 0 5M9.500 1.500q2.500 3.500 0 7" stroke="#eceef0" /></Ic>
      <div className="ml-[2px] flex w-[41px] flex-col items-center text-[6.600px] leading-[10px] tracking-[-0.1px] text-white">
        <span>21:14</span>
        <span>18/03/2024</span>
      </div>
      <Ic w={12} h={12} className="ml-[6px]"><path d="M1 1.500h9v7H7.500L6 10.500 4.500 8.500H1z" stroke="#fff" strokeWidth="1" /></Ic>
    </div>
  </div>
);

export default function App() {
  return (
    <div className="flex h-[720px] w-[1280px] justify-center overflow-hidden bg-black font-['Open_Sans','Noto_Sans',sans-serif] text-[6.500px] leading-none text-[#d6dae0]">
      <div className="flex w-[1108px] flex-col whitespace-nowrap bg-white">
        <div className="flex h-[600px] flex-col border-x-[2px] border-t-[2px] border-[#10141b] bg-[#222933]">
          <div className="flex h-[27px] pl-[2px] pt-[1px]">
            <div className="pt-[1px]"><AppButton /></div>
            <div className="flex flex-col"><TitleBar /><MenuTabs /></div>
          </div>
          <div className="flex h-[57px] pl-[2px]">
            <Draw />
            <Edit />
            <Annotate />
            <Layer />
            <Block />
            <Properties />
            <Groups />
            <Utilities />
            <Clipboard />
            <View />
          </div>
          <FileTabs />
          <div className="flex flex-1 flex-col border-b-[2px] border-l border-r border-t-[3px] border-[#39424f]">
            <div className="relative h-[478px] shrink-0 bg-[#212830]">
              <Model />
              <div className="relative pl-[2px] pt-[5px] text-[6.750px] tracking-[-0.050px] text-[#e1e4e8]">[−][Vista personalizzata][Realistico]</div>
              <div className="absolute left-[1040px] top-[111px] flex h-[10px] w-[27px] items-center gap-[3px] rounded-[2px] border border-[#b0b3b6] bg-[#989b9f] pl-[2px] text-[6.500px] text-[#5d6166]">
                WCS
                <svg width="5" height="3" viewBox="0 0 5 3"><path d="M.5.500h4L2.500 2.500z" fill="none" stroke="#dcdee0" strokeWidth=".5" /></svg>
              </div>
              <NavBar />
              <CommandLine />
            </div>
            <StatusBar />
          </div>
        </div>
        <Taskbar />
      </div>
    </div>
  );
}
